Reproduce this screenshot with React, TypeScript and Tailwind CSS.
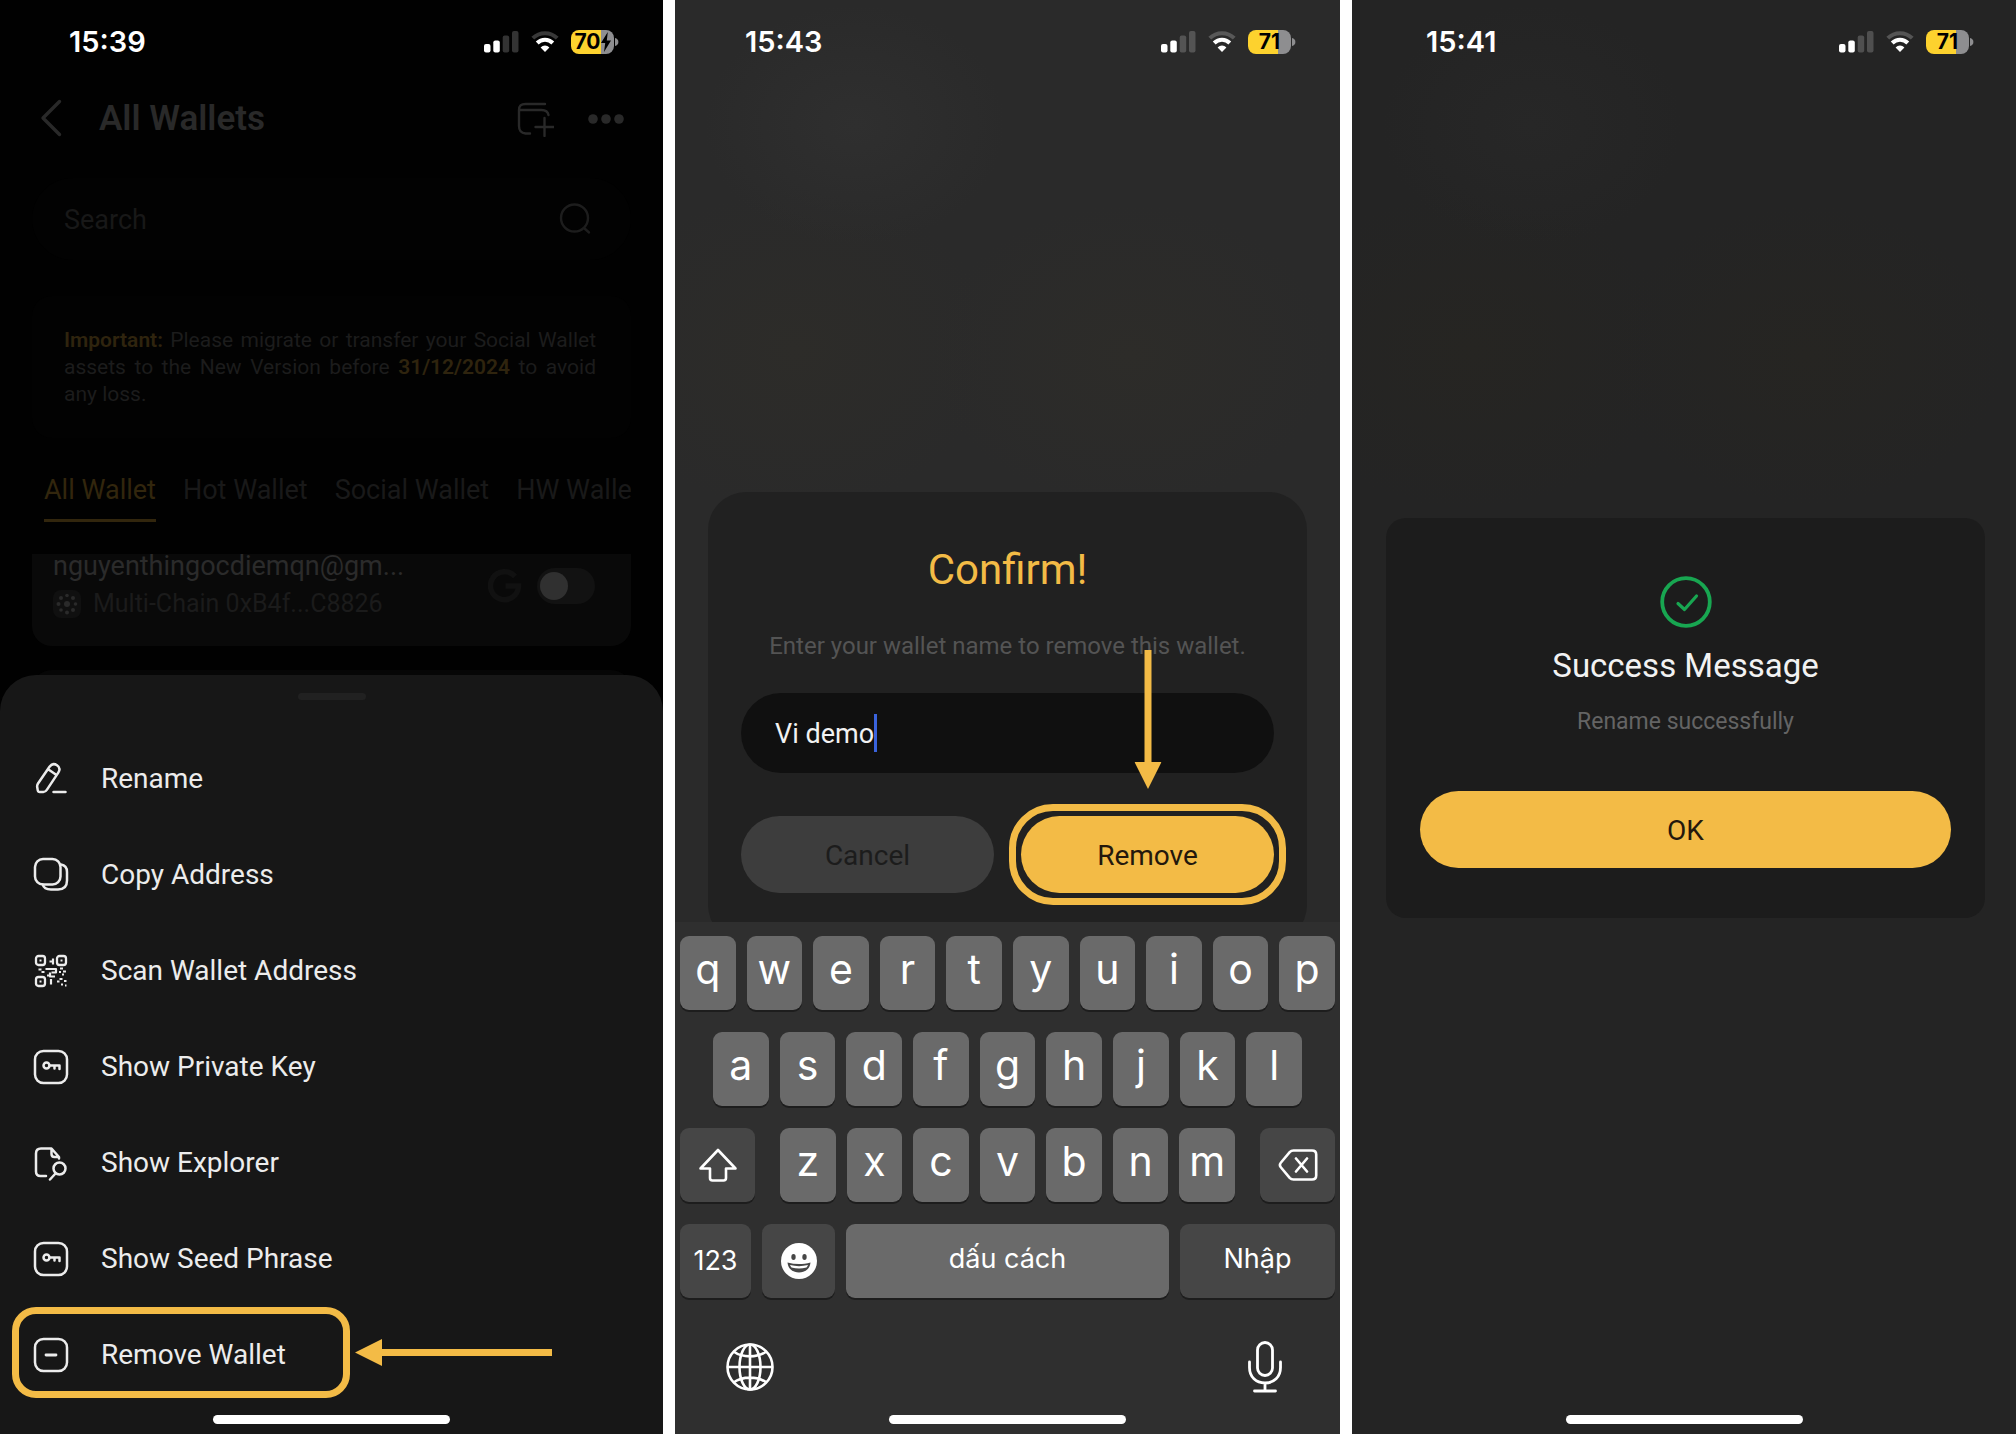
import type { ReactNode } from 'react';

function StatusBar({ time, level, charging = false, padding = 'pl-[70px] pr-[44px]' }: { time: string; level: string; charging?: boolean; padding?: string }) {
  return (
    <header className={`flex h-[84px] items-center justify-between font-['Inter',sans-serif] ${padding}`}>
      <time className="text-[29px] font-semibold leading-8 text-white">{time}</time>
      <div className="flex items-center gap-3">
        <svg width="35" height="22" viewBox="0 0 35 22" role="img" aria-label="Signal">
          <rect x="0" y="13" width="6.5" height="8.5" rx="2" fill="#fff" />
          <rect x="9.3" y="9.5" width="6.5" height="12" rx="2" fill="#fff" />
          <rect x="18.7" y="4.5" width="6.5" height="17" rx="2" fill="#fff" opacity=".2" />
          <rect x="28" y="0" width="6.5" height="21.5" rx="2" fill="#fff" opacity=".2" />
        </svg>
        <svg width="28" height="22" viewBox="0 0 28 22" fill="none" role="img" aria-label="Wi-Fi">
          <path d="M1.8 7.2a17.3 17.3 0 0 1 24.4 0" stroke="#fff" strokeOpacity=".22" strokeWidth="4" />
          <path d="M6.2 12a11 11 0 0 1 15.6 0" stroke="#fff" strokeWidth="4" />
          <path d="M14 21l-4.4-4.6a6.3 6.3 0 0 1 8.8 0z" fill="#fff" />
        </svg>
        <div className="flex items-center gap-px">
          <div className="flex h-6 w-[43px] items-center justify-center rounded-[8px] bg-[linear-gradient(90deg,#fdd22e_70%,#8e8e90_70%)] text-[21px] font-bold leading-6 text-black">
            {level}
            {charging && (
              <svg width="10" height="20" viewBox="0 0 10 20" aria-hidden="true">
                <path d="M6.8 0L0 11h4.2L3 20l7-11.5H5.8z" fill="#000" />
              </svg>
            )}
          </div>
          <svg width="4" height="8" viewBox="0 0 4 8" aria-hidden="true">
            <path d="M0 0c2.2.6 3.4 2 3.4 4S2.2 7.4 0 8z" fill="#8e8e90" />
          </svg>
        </div>
      </div>
    </header>
  );
}

function HomeIndicator() {
  return <div className="mx-auto mb-[10px] h-[9px] w-[237px] rounded-full bg-white" />;
}

function Icon({ children }: { children: ReactNode }) {
  return (
    <svg width="36" height="36" viewBox="0 0 36 36" fill="none" stroke="#ececec" strokeWidth="2.5" strokeLinecap="round" strokeLinejoin="round" aria-hidden="true">
      {children}
    </svg>
  );
}

const Box = () => <rect x="2" y="2" width="32" height="32" rx="8.5" />;

const KeyIcon = () => (
  <Icon>
    <Box />
    <circle cx="13.5" cy="16.5" r="3" />
    <path d="M16.5 16.5h10v3.5M21.5 16.5v3" />
  </Icon>
);

const Finder = ({ x, y }: { x: number; y: number }) => (
  <>
    <rect x={x} y={y} width="9" height="9" rx="2.5" strokeWidth="2.3" />
    <rect x={x + 3.5} y={y + 3.5} width="2" height="2" fill="#ececec" stroke="none" />
  </>
);

const MENU: { label: string; icon: ReactNode }[] = [
  {
    label: 'Rename',
    icon: (
      <Icon>
        <path d="M5 22.5L16.5 5.8c2-2.7 4.9-3.3 7.5-1.6s3.1 4.6 1.3 7.4L14 28.6c-1.1 1.7-2 2.4-3.6 2.4H6.8c-1.2 0-1.9-.7-2.1-1.9L4.200 26c-.2-1.400 0-2.300.8-3.500zM15.500 8.500l8 5.500M20.500 31h12" />
      </Icon>
    ),
  },
  {
    label: 'Copy Address',
    icon: (
      <Icon>
        <rect x="2" y="2" width="25.5" height="25.5" rx="8" />
        <path d="M28 7.5c3.8.6 6 3.2 6 7.5v8.5c0 6-3 9-9 9h-7c-4.6 0-7.4-1.5-8.3-5" />
      </Icon>
    ),
  },
  {
    label: 'Scan Wallet Address',
    icon: (
      <Icon>
        <Finder x={3} y={3} />
        <Finder x={24} y={3} />
        <Finder x={3} y={24} />
        <path strokeWidth="2.2" strokeLinecap="butt" d="M20 5.5v6M16.5 8.5h3M5.5 16.5h3M8.5 19h3M14 16h9v3.5h-4.5M12.5 16h2M17 22.5h-3M17 19.5v4h5M18 26v5.500M27 15.500h3M30 18.500h3M26 19h2M29 21.500h2M26.500 26h3M31 28h2.500M24 28.500h2.500M28 31.500h2M32 32.500h1.500" />
      </Icon>
    ),
  },
  { label: 'Show Private Key', icon: <KeyIcon /> },
  {
    label: 'Show Explorer',
    icon: (
      <Icon>
        <path d="M13 31H7.500C4.500 31 3 29.500 3 26.500v-18C3 5 4.500 3.500 8 3.500h10.500L26 12v1.500M18.500 4v5c0 2 1 3 3 3h4" />
        <circle cx="26.5" cy="23.5" r="6" />
        <path d="M22.5 28.5L17 34.5" />
      </Icon>
    ),
  },
  { label: 'Show Seed Phrase', icon: <KeyIcon /> },
  {
    label: 'Remove Wallet',
    icon: (
      <Icon>
        <Box />
        <path d="M13 18h10" strokeWidth="2.8" />
      </Icon>
    ),
  },
];

const CHAIN_DOTS = [
  [14, 14, 3],
  [14, 5.5, 1.8],
  [20, 8, 2],
  [22.5, 14, 1.8],
  [20, 20, 2],
  [14, 22.5, 2],
  [8, 20, 1.8],
  [5.5, 14, 2],
  [8, 8, 2],
];

function WalletsScreen() {
  return (
    <section className="grid min-h-screen grid-cols-[minmax(0,1fr)] overflow-hidden bg-[#010101] font-['Roboto',sans-serif]" aria-label="All Wallets">
      <div className="col-start-1 row-start-1">
        <StatusBar time="15:39" level="70" charging padding="pl-[69px] pr-[44px]" />
        <div className="flex h-[70px] items-center pl-[39px] pr-[38px] text-[#292929]">
          <button type="button" aria-label="Back">
            <svg width="23" height="40" viewBox="0 0 23 40" fill="none" stroke="currentColor" strokeWidth="3.4" strokeLinecap="round" strokeLinejoin="round">
              <path d="M20.5 2.5L4 19l16.5 16.5" />
            </svg>
          </button>
          <h1 className="ml-[37px] flex-1 text-[35px] font-semibold leading-10">All Wallets</h1>
          <button type="button" aria-label="Add wallet">
            <svg width="38" height="36" viewBox="0 0 38 36" fill="none" stroke="currentColor" strokeWidth="2.4" strokeLinecap="round">
              <path d="M29 3H9.5C5 3 3 5 3 9v16c0 5 2 7 6.5 7.5H14M3.5 9h22c4.5 0 6.500 2 7 5M28.500 17v18M19.500 26h18" />
            </svg>
          </button>
          <button type="button" aria-label="More" className="ml-[33px]">
            <svg width="38" height="12" viewBox="0 0 38 12" fill="currentColor">
              <circle cx="6" cy="6" r="4.8" />
              <circle cx="19" cy="6" r="4.8" />
              <circle cx="32" cy="6" r="4.8" />
            </svg>
          </button>
        </div>

        <div className="mx-8 mt-6 flex h-[82px] items-center rounded-full bg-[#020202] pl-8 pr-10">
          <input
            type="search"
            aria-label="Search wallets"
            placeholder="Search"
            className="h-10 min-w-0 flex-1 bg-transparent pt-[3px] text-[27px] text-[#888] outline-none placeholder:text-[#181818]"
          />
          <svg width="32" height="32" viewBox="0 0 32 32" fill="none" stroke="#1d1d1d" strokeWidth="2.4" strokeLinecap="round" aria-hidden="true">
            <circle cx="15.5" cy="15" r="13.5" />
            <path d="M25 25l5 4.5" />
          </svg>
        </div>

        <p className="mx-8 mt-9 rounded-[20px] bg-[#020202] pb-[30px] pl-8 pr-[35px] pt-[31px] text-justify text-[21px] leading-[27px] text-[#1c1c1c]">
          <b className="font-semibold text-[#2f240e]">Important:</b> Please migrate or transfer your Social Wallet assets to the New Version before{' '}
          <b className="font-semibold text-[#2f240e]">31/12/2024</b> to avoid any loss.
        </p>

        <nav className="mx-8 mt-[34px] flex gap-[27px] overflow-hidden whitespace-nowrap pl-3 text-[27px] leading-9 text-[#191919]">
          <button type="button" className="shrink-0 border-b-[3px] border-[#32260d] pb-[11px] text-[#32260d]">All Wallet</button>
          <button type="button" className="shrink-0 pb-[14px]">Hot Wallet</button>
          <button type="button" className="shrink-0 pb-[14px]">Social Wallet</button>
          <button type="button" className="shrink-0 pb-[14px]">HW Wallet</button>
        </nav>

        <div className="mx-8 mt-8 flex items-center rounded-b-[20px] bg-[#090909] pb-7 pl-[21px] pr-[36px]">
          <div className="flex-1">
            <h2 className="text-[27px] leading-6 text-[#2b2b2b]">nguyenthingocdiemqn@gm...</h2>
            <div className="mt-3 flex items-center gap-3">
              <svg width="28" height="28" viewBox="0 0 28 28" aria-hidden="true">
                <rect width="28" height="28" rx="8" fill="#101010" />
                {CHAIN_DOTS.map(([cx, cy, r]) => (
                  <circle key={`${cx}-${cy}`} cx={cx} cy={cy} r={r} fill="#2a2a2a" />
                ))}
              </svg>
              <span className="text-[25px] leading-7 text-[#1b1b1b]">Multi-Chain 0xB4f...C8826</span>
            </div>
          </div>
          <svg width="34" height="34" viewBox="0 0 34 34" fill="none" stroke="#111111" strokeWidth="5.5" role="img" aria-label="Google">
            <path d="M27 7.5A14 14 0 1 0 30.5 17H17.5" />
          </svg>
          <label className="ml-[15px] flex h-9 w-[58px] items-center rounded-full bg-[#121212] p-[3px]">
            <input type="checkbox" aria-label="Enable wallet" className="peer sr-only" />
            <span className="size-7 rounded-full bg-[#303030]" />
          </label>
        </div>
        <div className="mx-8 mt-6 h-10 rounded-t-[20px] bg-[#060606]" />
      </div>

      <div className="z-10 col-start-1 row-start-1 self-end rounded-t-[36px] bg-[#171717] pt-[18px]">
        <div className="mx-auto h-[7px] w-[68px] rounded-full bg-[#212121]" />
        <ul className="mb-3 mt-[31px]">
          {MENU.map(({ label, icon }) => (
            <li key={label} className="relative">
              <button type="button" className="flex h-24 w-full items-center gap-8 pl-[33px] text-[28px] leading-9 text-[#ececec]">
                {icon}
                {label}
              </button>
              {label === 'Remove Wallet' && (
                <div className="pointer-events-none absolute left-3 top-0 flex items-center gap-[5px]">
                  <div className="h-[91px] w-[338px] rounded-[24px] border-[7px] border-[#f3bb46]" />
                  <svg width="197" height="27" viewBox="0 0 197 27" aria-hidden="true">
                    <path d="M0 13.5L27 0v10h170v7H27v10z" fill="#f3bb46" />
                  </svg>
                </div>
              )}
            </li>
          ))}
        </ul>
        <HomeIndicator />
      </div>
    </section>
  );
}

const LETTER =
  'flex h-[74px] min-w-0 flex-1 items-center justify-center rounded-[9px] bg-[#6a6a6a] pb-2 font-normal text-[41px] leading-none text-white shadow-[0_2px_0_#1d1d1d]';
const FUNC = 'flex h-[74px] items-center justify-center rounded-[9px] bg-[#464646] text-white shadow-[0_2px_0_#1d1d1d]';

function Letters({ keys }: { keys: string }) {
  return (
    <>
      {keys.split('').map((k) => (
        <button key={k} type="button" className={LETTER}>
          {k}
        </button>
      ))}
    </>
  );
}

function Keyboard() {
  return (
    <div className="z-10 col-start-1 row-start-1 self-end bg-[#2f2f2f] pt-[14px] font-['Inter',sans-serif]">
      <div className="flex flex-col gap-[22px] px-[5px]">
        <div className="flex gap-[11px]">
          <Letters keys="qwertyuiop" />
        </div>
        <div className="flex gap-[11px] px-[33px]">
          <Letters keys="asdfghjkl" />
        </div>
        <div className="flex">
          <button type="button" aria-label="Shift" className={`${FUNC} w-[75px]`}>
            <svg width="40" height="36" viewBox="0 0 40 36" fill="none" stroke="#fff" strokeWidth="2.6" strokeLinejoin="round">
              <path d="M20 3L37.5 21.5H28V31c0 1.5-.8 2.5-2.5 2.5h-11c-1.7 0-2.5-1-2.5-2.5v-9.5H2.5z" />
            </svg>
          </button>
          <div className="mx-[25px] flex flex-1 gap-[11px]">
            <Letters keys="zxcvbnm" />
          </div>
          <button type="button" aria-label="Delete" className={`${FUNC} w-[75px]`}>
            <svg width="40" height="34" viewBox="0 0 40 34" fill="none" stroke="#fff" strokeWidth="2.6" strokeLinejoin="round" strokeLinecap="round">
              <path d="M15.500 2.500H34c2.800 0 4.200 1.400 4.200 4v21c0 2.600-1.400 4-4.200 4H15.500c-1.600 0-2.800-.6-3.800-1.700L3 19.500c-1.500-1.700-1.500-3.300 0-5l8.700-10.300c1-1.100 2.200-1.700 3.800-1.700zM18 10.500l11 13M29 10.500l-11 13" />
            </svg>
          </button>
        </div>
        <div className="flex gap-[11px] text-[27px] leading-9">
          <button type="button" className={`${FUNC} w-[71px]`}>123</button>
          <button type="button" aria-label="Emoji" className={`${FUNC} w-[73px]`}>
            <svg width="36" height="36" viewBox="0 0 36 36">
              <circle cx="18" cy="18" r="18" fill="#fff" />
              <ellipse cx="12.5" cy="14" rx="2.2" ry="3" fill="#464646" />
              <ellipse cx="23.5" cy="14" rx="2.2" ry="3" fill="#464646" />
              <path d="M6.5 19.5c7.5 2 15.5 2 23 0-.6 6.5-5.5 10-11.5 10s-10.9-3.5-11.5-10z" fill="#464646" />
              <path d="M9 22c6 1.5 12 1.5 18 0-.3 1-.8 1.8-1.5 2.5-5 1.3-10 1.3-15 0C9.8 23.8 9.3 23 9 22z" fill="#fff" />
            </svg>
          </button>
          <button type="button" className="flex h-[74px] flex-1 items-center justify-center rounded-[9px] bg-[#6a6a6a] pb-1 text-white shadow-[0_2px_0_#1d1d1d]">
            dấu cách
          </button>
          <button type="button" className={`${FUNC} w-[155px] pb-1`}>Nhập</button>
        </div>
      </div>
      <div className="mb-[22px] mt-[43px] flex justify-between px-[50px]">
        <button type="button" aria-label="Next keyboard">
          <svg width="50" height="50" viewBox="0 0 50 50" fill="none" stroke="#fff" strokeWidth="2.6">
            <circle cx="25" cy="25" r="22.5" />
            <ellipse cx="25" cy="25" rx="10.5" ry="22.5" />
            <path d="M25 2.5v45M2.5 25h45M8.5 9.5c9 6.5 24 6.5 33 0M8.5 40.5c9-6.5 24-6.5 33 0" />
          </svg>
        </button>
        <button type="button" aria-label="Dictation">
          <svg width="50" height="52" viewBox="0 0 50 52" fill="none" stroke="#fff" strokeWidth="2.8" strokeLinecap="round">
            <rect x="17.5" y="1.5" width="15" height="33" rx="7.5" />
            <path d="M9.5 21v5.5C9.5 36 16 42 25 42s15.5-6 15.5-15.5V21M25 42v8M14.5 50h21" />
          </svg>
        </button>
      </div>
      <HomeIndicator />
    </div>
  );
}

function ConfirmScreen() {
  return (
    <section
      aria-label="Confirm removal"
      className="grid min-h-screen grid-cols-[minmax(0,1fr)] overflow-hidden bg-[#2a2a2a] bg-[radial-gradient(ellipse_150px_120px_at_180px_125px,#2f2f2f,transparent),radial-gradient(ellipse_200px_160px_at_120px_350px,#2d2c29,transparent),radial-gradient(ellipse_200px_150px_at_455px_355px,#2d2c29,transparent)] font-['Roboto',sans-serif]"
    >
      <div className="col-start-1 row-start-1">
        <StatusBar time="15:43" level="71" />
      </div>
      <div role="dialog" aria-labelledby="confirm-title" className="col-start-1 row-start-1 mx-[33px] mt-px self-center rounded-[38px] bg-[#212121] px-[33px] pb-[50px] pt-[54px]">
        <h2 id="confirm-title" className="text-center text-[42px] leading-[48px] text-[#f3bb46]">Confirm!</h2>
        <label htmlFor="wallet-name" className="mt-9 block text-center text-[24px] leading-8 text-[#545454]">
          Enter your wallet name to remove this wallet.
        </label>
        <div className="mt-[31px] flex h-20 items-center rounded-full bg-[#101010] px-[34px]">
          <input id="wallet-name" defaultValue="Vi demo" className="h-10 field-sizing-content bg-transparent pt-[3px] text-[27px] text-[#f2f2f2] outline-none" />
          <span className="h-[38px] w-[3px] bg-[#3a63dc]" />
        </div>
        <div className="mt-[43px] flex gap-[27px] text-[28px] leading-9">
          <button type="button" className="h-[77px] flex-1 rounded-full bg-[#3d3d3d] pt-[3px] text-[#1c1c1c]">Cancel</button>
          <div className="relative flex flex-1">
            <button type="button" className="h-[77px] flex-1 rounded-full bg-[#f3bb46] pt-[3px] text-[#24180c]">Remove</button>
            <div className="pointer-events-none absolute -inset-3 rounded-[44px] border-[7px] border-[#f3bb46]" />
            <svg width="27" height="139" viewBox="0 0 27 139" aria-hidden="true" className="pointer-events-none absolute bottom-full left-1/2 mb-[27px] -translate-x-1/2">
              <path d="M10 0h7v112h10l-13.5 27L0 112h10z" fill="#f3bb46" />
            </svg>
          </div>
        </div>
      </div>
      <Keyboard />
    </section>
  );
}

function SuccessScreen() {
  return (
    <section
      aria-label="Rename result"
      className="grid min-h-screen grid-cols-[minmax(0,1fr)] overflow-hidden bg-[#242424] bg-[radial-gradient(ellipse_150px_120px_at_180px_125px,#272727,transparent),radial-gradient(ellipse_200px_160px_at_120px_350px,#262522,transparent),radial-gradient(ellipse_200px_150px_at_455px_355px,#262522,transparent)] font-['Roboto',sans-serif]"
    >
      <div className="col-start-1 row-start-1">
        <StatusBar time="15:41" level="71" padding="pl-[74px] pr-[42px]" />
      </div>
      <div role="dialog" aria-labelledby="success-title" className="col-start-1 row-start-1 ml-[34px] mr-[31px] mt-0.5 flex flex-col items-center self-center rounded-[20px] bg-[#1c1c1c] px-[34px] pb-[50px] pt-[58px]">
        <svg width="52" height="52" viewBox="0 0 52 52" fill="none" stroke="#18a651" strokeWidth="3.8" strokeLinecap="round" strokeLinejoin="round" aria-hidden="true">
          <circle cx="26" cy="26" r="23.8" />
          <path d="M18 27.500l6.500 6L36.500 20" strokeWidth="3.2" />
        </svg>
        <h2 id="success-title" className="mt-[18px] text-[33px] leading-10 text-[#f2f2f2]">Success Message</h2>
        <p className="mt-5 text-[23px] leading-8 text-[#646464]">Rename successfully</p>
        <button type="button" className="mt-[53px] h-[77px] w-full rounded-full bg-[#f3bb46] pt-[3px] text-[28px] leading-9 text-[#24180c]">OK</button>
      </div>
      <div className="col-start-1 row-start-1 self-end">
        <HomeIndicator />
      </div>
    </section>
  );
}

export default function App() {
  return (
    <main className="grid min-h-screen grid-cols-[663fr_665fr_664fr] gap-3 bg-white">
      <WalletsScreen />
      <ConfirmScreen />
      <SuccessScreen />
    </main>
  );
}
